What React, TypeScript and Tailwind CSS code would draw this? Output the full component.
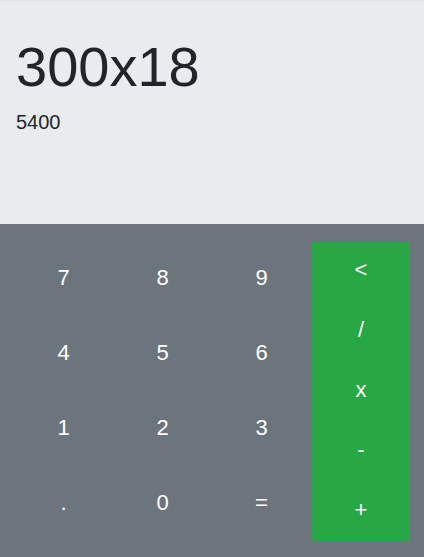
const DIGITS = ["7", "8", "9", "4", "5", "6", "1", "2", "3", ".", "0", "="];
const OPS = ["<", "/", "x", "-", "+"];

export default function App() {
  return (
    <div className="h-[557px] w-full flex flex-col font-['Liberation_Sans',Arial,sans-serif]">
      {/* Display */}
      <div className="h-[224px] bg-[#e9ecef] border-t border-[#dee2e6] px-4 pt-[32px] text-[#212529]">
        <h1 className="text-[56px] leading-[1.2] mb-[7px]">300x18</h1>
        <p className="text-[20px] leading-[1.5]">5400</p>
      </div>

      {/* Keypad */}
      <div className="flex-1 bg-[#6c757d] pt-[18px] pl-[14px] pr-[14px] flex">
        <div className="grid grid-cols-3 w-[297px] h-[300px]">
          {DIGITS.map((d) => (
            <button
              key={d}
              className="flex items-center justify-center pb-[4px] text-[22px] text-white"
            >
              {d}
            </button>
          ))}
        </div>
        <div className="flex flex-col ml-[1px] w-[98px] h-[299px] bg-[#28a745]">
          {OPS.map((op) => (
            <button
              key={op}
              className="flex-1 flex items-center justify-center pb-[4px] text-[22px] text-white"
            >
              {op}
            </button>
          ))}
        </div>
      </div>
    </div>
  );
}
